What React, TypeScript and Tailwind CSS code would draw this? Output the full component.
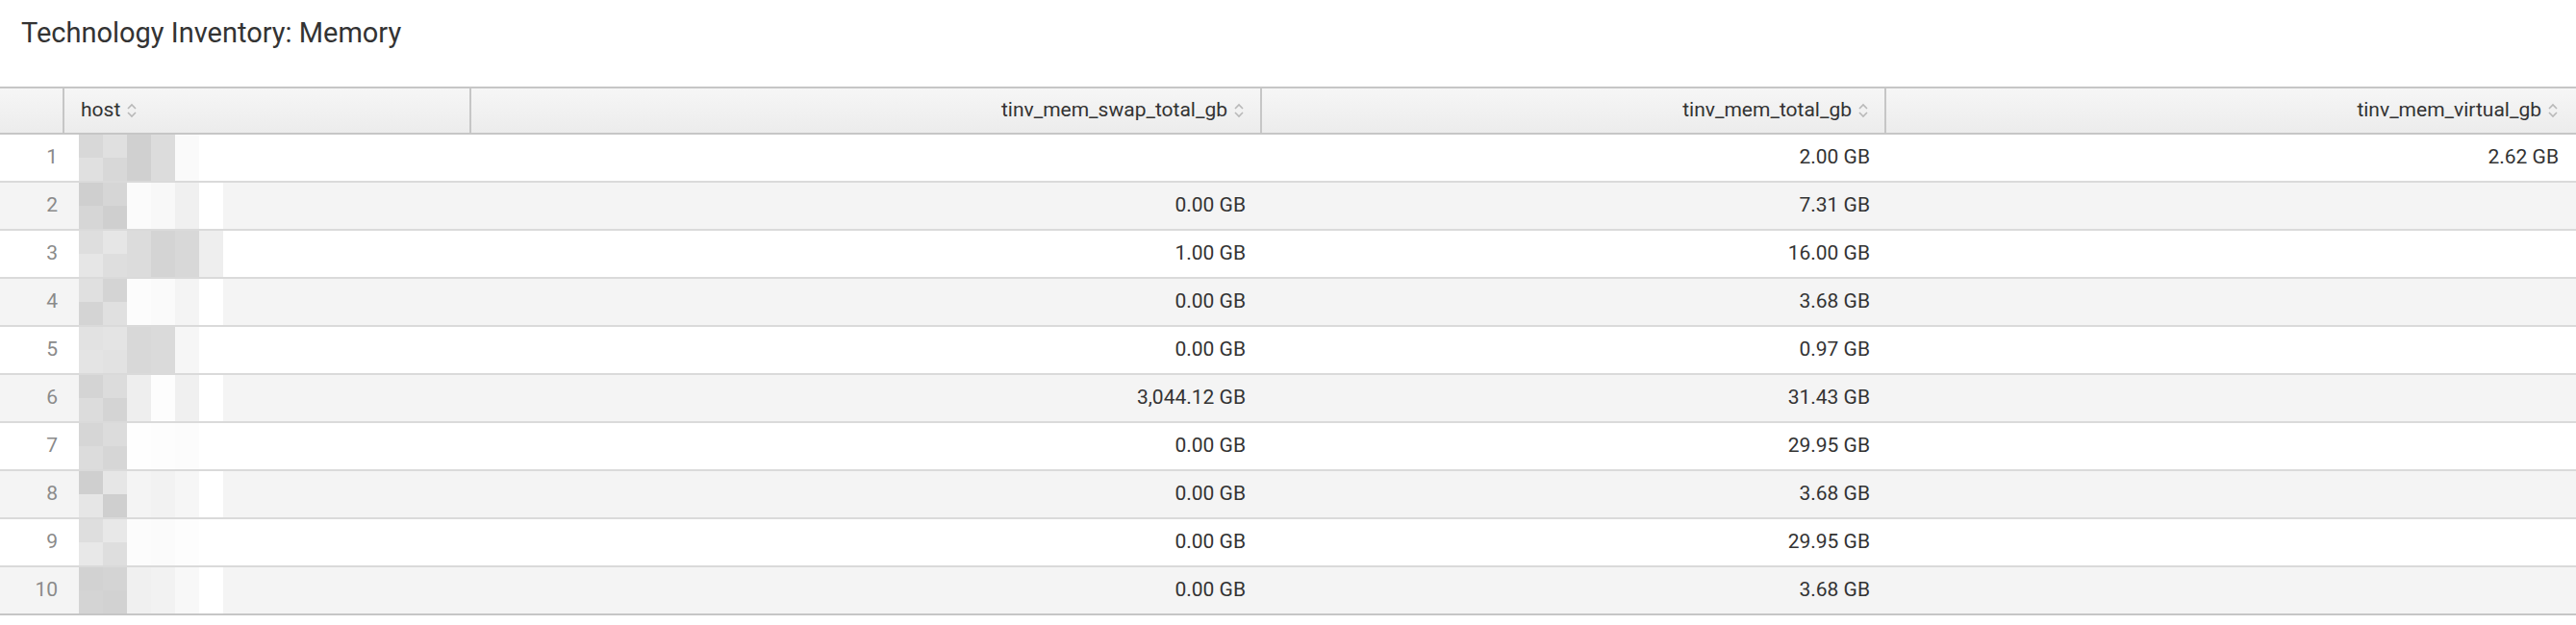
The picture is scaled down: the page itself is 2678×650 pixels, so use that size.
import React from "react";

const rows = [
  ["", "2.00 GB", "2.62 GB"],
  ["0.00 GB", "7.31 GB", ""],
  ["1.00 GB", "16.00 GB", ""],
  ["0.00 GB", "3.68 GB", ""],
  ["0.00 GB", "0.97 GB", ""],
  ["3,044.12 GB", "31.43 GB", ""],
  ["0.00 GB", "29.95 GB", ""],
  ["0.00 GB", "3.68 GB", ""],
  ["0.00 GB", "29.95 GB", ""],
  ["0.00 GB", "3.68 GB", ""],
];

const shades = [
  ["#d8d8d8", "#e0e0e0", "#d0d0d0", "#dcdcdc", "#fafafa", "#ffffff"],
  ["#cfcfcf", "#d6d6d6", "#fbfbfb", "#f8f8f8", "#f0f0f0", "#ffffff"],
  ["#dedede", "#e6e6e6", "#dcdcdc", "#d4d4d4", "#d8d8d8", "#eeeeee"],
  ["#e0e0e0", "#d4d4d4", "#fcfcfc", "#fafafa", "#f4f4f4", "#ffffff"],
  ["#e2e2e2", "#e4e4e4", "#d8d8d8", "#dadada", "#f6f6f6", "#ffffff"],
  ["#d4d4d4", "#dcdcdc", "#eeeeee", "#fdfdfd", "#f0f0f0", "#ffffff"],
  ["#d6d6d6", "#dcdcdc", "#fefefe", "#fdfdfd", "#fcfcfc", "#ffffff"],
  ["#cfcfcf", "#e6e6e6", "#f4f4f4", "#f2f2f2", "#f6f6f6", "#ffffff"],
  ["#dedede", "#e8e8e8", "#fcfcfc", "#fbfbfb", "#fdfdfd", "#ffffff"],
  ["#d2d2d2", "#d4d4d4", "#f0f0f0", "#f2f2f2", "#f8f8f8", "#ffffff"],
];

function Sort() {
  return (
    <svg width="12" height="16" viewBox="0 0 12 16" className="ml-[6px] inline-block">
      <path d="M2 6 L6 2 L10 6" fill="none" stroke="#b8b8b8" strokeWidth="1.6" />
      <path d="M2 10 L6 14 L10 10" fill="none" stroke="#b8b8b8" strokeWidth="1.6" />
    </svg>
  );
}

function Blur({ i }: { i: number }) {
  const s = shades[i];
  return (
    <div className="grid grid-cols-[repeat(6,25px)] grid-rows-[repeat(2,25px)]">
      {[0, 1].map((r) =>
        s.map((c, k) => (
          <div key={r + "-" + k} style={{ background: r === 0 ? c : k < 2 ? s[1 - k] : c }} />
        ))
      )}
    </div>
  );
}

export default function App() {
  return (
    <div className="w-[2678px] h-[650px] bg-white text-[#333]" style={{ fontFamily: "Roboto, sans-serif" }}>
      <div className="h-[90px] pl-[22px] pt-[16px] text-[29px] leading-[36px] text-[#333]">
        Technology Inventory: Memory
      </div>
      <div className="grid grid-cols-[67px_423px_822px_649px_717px] text-[21px]">
        <div className="h-[50px] border-y-2 border-[#c6c6c6] bg-gradient-to-b from-[#f6f6f6] to-[#ececec] border-r-2" />
        <div className="h-[50px] border-y-2 border-r-2 border-[#c6c6c6] bg-gradient-to-b from-[#f6f6f6] to-[#ececec] flex items-center pl-[17px]">
          host<Sort />
        </div>
        <div className="h-[50px] border-y-2 border-r-2 border-[#c6c6c6] bg-gradient-to-b from-[#f6f6f6] to-[#ececec] flex items-center justify-end pr-[16px]">
          tinv_mem_swap_total_gb<Sort />
        </div>
        <div className="h-[50px] border-y-2 border-r-2 border-[#c6c6c6] bg-gradient-to-b from-[#f6f6f6] to-[#ececec] flex items-center justify-end pr-[16px]">
          tinv_mem_total_gb<Sort />
        </div>
        <div className="h-[50px] border-y-2 border-[#c6c6c6] bg-gradient-to-b from-[#f6f6f6] to-[#ececec] flex items-center justify-end pr-[18px]">
          tinv_mem_virtual_gb<Sort />
        </div>
        {rows.map((r, i) => {
          const bg = i % 2 === 1 ? "bg-[#f4f4f4]" : "bg-white";
          const bd = i === 9 ? "border-b-2 border-[#c6c6c6]" : "border-b-2 border-[#dadada]";
          return (
            <React.Fragment key={i}>
              <div className={`h-[50px] ${bg} ${bd} flex items-center justify-end pr-[7px] text-[#8a8a8a]`}>{i + 1}</div>
              <div className={`h-[50px] ${bg} ${bd} flex items-center pl-[15px] overflow-hidden`}>
                <Blur i={i} />
              </div>
              <div className={`h-[50px] ${bg} ${bd} flex items-center justify-end pr-[17px]`}>{r[0]}</div>
              <div className={`h-[50px] ${bg} ${bd} flex items-center justify-end pr-[17px]`}>{r[1]}</div>
              <div className={`h-[50px] ${bg} ${bd} flex items-center justify-end pr-[18px]`}>{r[2]}</div>
            </React.Fragment>
          );
        })}
      </div>
    </div>
  );
}
